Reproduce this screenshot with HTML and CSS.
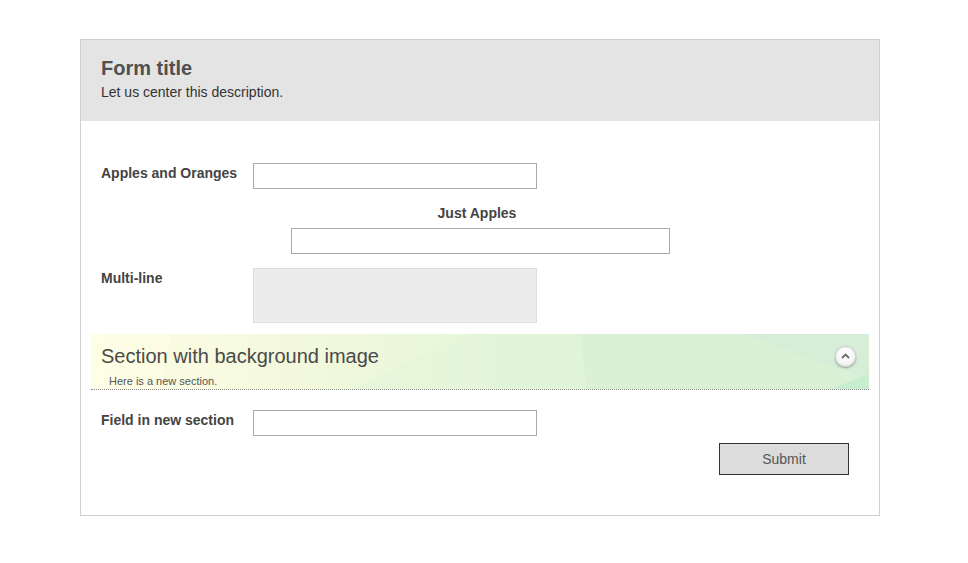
FILE: index.html
```html
<!DOCTYPE html>
<html>
<head>
<meta charset="utf-8">
<link rel="stylesheet" href="styles.css">
</head>
<body>
<form class="form">
  <div class="form-header">
    <h1 class="form-title">Form title</h1>
    <div class="form-desc">Let us center this description.</div>
  </div>
  <div class="form-body">
    <div class="row row-first">
      <label class="label">Apples and Oranges</label>
      <input class="input" type="text">
    </div>
    <div class="row-center">
      <label class="label-center">Just Apples</label>
      <input class="input input-wide" type="text">
    </div>
    <div class="row row-multi">
      <label class="label">Multi-line</label>
      <textarea class="textarea"></textarea>
    </div>
    <div class="section">
      <svg class="section-bg" viewBox="0 0 778 55" preserveAspectRatio="none">
        <defs>
          <linearGradient id="g" x1="0" y1="0" x2="1" y2="0">
            <stop offset="0" stop-color="#fdfde4"/>
            <stop offset="0.25" stop-color="#f4f9dd"/>
            <stop offset="0.5" stop-color="#e5f6d9"/>
            <stop offset="0.7" stop-color="#dbf1d7"/>
            <stop offset="1" stop-color="#d6efd6"/>
          </linearGradient>
        </defs>
        <rect x="0" y="0" width="778" height="55" fill="url(#g)"/>
        <polygon points="0,0 80,0 68,55 0,55" fill="#fefee6" opacity="0.7"/>
        <polygon points="380,0 778,0 778,55 260,55" fill="#e3f5d9" opacity="0.6"/>
        <polygon points="490,0 778,0 778,55 495,55" fill="#d9f0d6" opacity="0.8"/>
        <polygon points="650,0 778,0 778,45" fill="#d4ecd8" opacity="0.8"/>
        <polygon points="778,40 778,55 740,55" fill="#c8edd1"/>
      </svg>
      <div class="section-head">
        <h2 class="section-title">Section with background image</h2>
        <button type="button" class="collapse" aria-label="Collapse">
          <svg width="9" height="6" viewBox="0 0 9 6"><path d="M1.5 4.5 L4.5 1.5 L7.5 4.5" fill="none" stroke="#6a6a6a" stroke-width="1.8" stroke-linecap="round" stroke-linejoin="round"/></svg>
        </button>
      </div>
      <div class="section-desc">Here is a new section.</div>
    </div>
    <div class="row row-section">
      <label class="label">Field in new section</label>
      <input class="input" type="text">
    </div>
    <div class="actions">
      <button type="button" class="submit">Submit</button>
    </div>
  </div>
</form>
</body>
</html>
```
FILE: styles.css
```css
* { box-sizing: border-box; }
body {
  margin: 0;
  background: #fff;
  font-family: "Liberation Sans", Arial, sans-serif;
  color: #444;
}
.form {
  width: 800px;
  margin: 39px 0 0 80px;
  border: 1px solid #cfcfcf;
}
.form-header {
  background: #e4e4e4;
  height: 81px;
  padding: 16px 20px 0;
}
.form-title {
  margin: 0;
  font-size: 20px;
  line-height: 24px;
  font-weight: bold;
  color: #505050;
}
.form-desc {
  margin-top: 3px;
  font-size: 14px;
  line-height: 18px;
  color: #333;
}
.form-body {
  padding: 42px 10px 40px;
}
.row {
  display: flex;
  align-items: flex-start;
}
.label {
  width: 162px;
  padding-left: 10px;
  padding-top: 2px;
  font-size: 14px;
  line-height: 16px;
  font-weight: bold;
  color: #444;
}
.input {
  width: 284px;
  height: 26px;
  border: 1px solid #a9a9a9;
  margin: 0;
  padding: 2px 4px;
  background: #fff;
  font: inherit;
}
.row-center {
  margin-top: 16px;
  display: flex;
  flex-direction: column;
  align-items: center;
}
.label-center {
  font-size: 14px;
  line-height: 16px;
  font-weight: bold;
  color: #444;
  margin-left: -6px;
}
.input-wide {
  width: 379px;
  margin-top: 7px;
  margin-left: 1px;
}
.row-multi {
  margin-top: 14px;
}
.textarea {
  width: 284px;
  height: 55px;
  margin: 0;
  border: 1px solid #dedede;
  background: #ececec;
  resize: none;
  font: inherit;
}
.section {
  position: relative;
  margin-top: 11px;
  height: 56px;
  border-bottom: 1px dotted #888;
  padding: 10px 10px 0 10px;
  overflow: hidden;
}
.section-bg {
  position: absolute;
  left: 0;
  top: 0;
  width: 100%;
  height: 100%;
  z-index: 0;
}
.section-head {
  position: relative;
  display: flex;
  justify-content: space-between;
  align-items: center;
}
.section-title {
  margin: 0;
  font-size: 20px;
  line-height: 24px;
  font-weight: normal;
  color: #4a4a4a;
}
.collapse {
  width: 21px;
  height: 21px;
  border-radius: 50%;
  border: 1px solid #d0d0d0;
  background: radial-gradient(circle at 50% 35%, #ffffff 0%, #f6f6f6 60%, #e2e2e2 100%);
  box-shadow: 0 1px 2px rgba(0,0,0,0.35);
  padding: 0;
  margin-right: 3px;
  display: flex;
  align-items: center;
  justify-content: center;
}
.section-desc {
  position: relative;
  margin-top: 7px;
  padding-left: 8px;
  font-size: 11px;
  line-height: 13px;
  color: #555;
}
.row-section {
  margin-top: 20px;
}
.actions {
  display: flex;
  justify-content: flex-end;
  margin-top: 7px;
  padding-right: 20px;
}
.submit {
  width: 130px;
  height: 32px;
  background: #dcdcdc;
  border: 1px solid #333;
  font-family: "Liberation Sans", Arial, sans-serif;
  font-size: 14px;
  color: #555;
  padding: 0;
}
```
